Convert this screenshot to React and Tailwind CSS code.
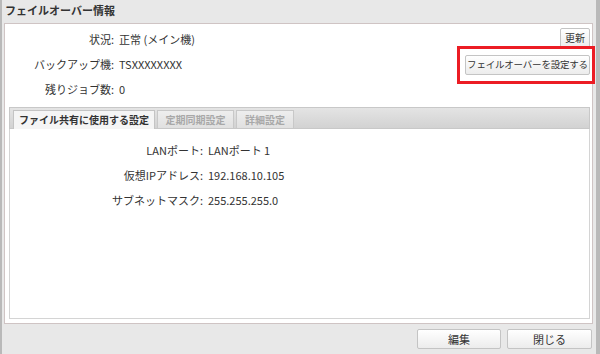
import React, { useState } from 'react';

const font = { fontFamily: '"Noto Sans CJK JP", "Noto Sans", sans-serif' };

const Btn = ({ children, className = '' }) => (
    <button
        className={`h-[20px] flex items-center justify-center whitespace-nowrap rounded-[2px] border border-[#c4c4c4] bg-gradient-to-b from-[#ffffff] to-[#ececec] leading-none text-[#333] ${className}`}
    >
        {children}
    </button>
);

const Row = ({ label, value, labelWidth }) => (
    <div className="flex items-center h-[25px] text-[11px] leading-none text-[#333]">
        <span className={`${labelWidth} text-right`}>{label}:</span>
        <span className="ml-[5px]">{value}</span>
    </div>
);

const tabs = [
    { name: 'ファイル共有に使用する設定', w: 'w-[142px]' },
    { name: '定期同期設定', w: 'w-[77px]' },
    { name: '詳細設定', w: 'w-[58px]' },
];

const App = () => {
    const [active, setActive] = useState(0);

    return (
        <div style={font} className="w-[600px] h-[354px] bg-[#e8e8e8] border-l-2 border-r-4 border-[#b9b9b9] flex flex-col">
            <div className="h-[23px] pl-[3px] pt-[5px] text-[11px] leading-none font-bold text-[#333]">
                フェイルオーバー情報
            </div>

            <div className="ml-[2px] w-[589px] h-[301px] bg-white border border-[#cfc4c4] flex flex-col">
                <div className="flex h-[83px]">
                    <div className="flex-1 pt-[3px]">
                        <Row label="状況" value="正常 (メイン機)" labelWidth="w-[109px]" />
                        <Row label="バックアップ機" value="TSXXXXXXXX" labelWidth="w-[109px]" />
                        <Row label="残りジョブ数" value="0" labelWidth="w-[109px]" />
                    </div>
                    <div className="flex flex-col items-end pt-[4px] pr-[2px]">
                        <Btn className="w-[30px] text-[10px]">更新</Btn>
                        <div className="relative mt-[7px]">
                            <Btn className="w-[125px] text-[9.5px] tracking-[-0.2px]">フェイルオーバーを設定する</Btn>
                            <div className="absolute -left-[8px] -right-[5px] -top-[9px] -bottom-[9px] border-[3px] border-[#ec1c24] pointer-events-none" />
                        </div>
                    </div>
                </div>

                <div className="ml-[4px] mr-[2px] flex-1 mb-[4px] flex flex-col">
                    <div className="h-[22px] border border-[#c8c8c8] bg-gradient-to-b from-[#e4e4e4] to-[#d2d2d2] flex items-end pl-[3px] gap-[2px]">
                        {tabs.map((t, i) => (
                            <div
                                key={t.name}
                                onClick={() => setActive(i)}
                                className={
                                    i === active
                                        ? `${t.w} h-[19px] -mb-px flex items-center justify-center border border-b-0 border-[#c4c4c4] bg-[#f5f5f5] text-[10px] leading-none font-bold text-[#333] cursor-pointer`
                                        : `${t.w} h-[18px] flex items-center justify-center border border-b-0 border-[#c8c8c8] bg-gradient-to-b from-[#eeeeee] to-[#e0e0e0] text-[10px] leading-none font-bold text-[#a8a8a8] cursor-pointer`
                                }
                            >
                                {t.name}
                            </div>
                        ))}
                    </div>
                    <div className="flex-1 border border-t-0 border-[#d4d4d4] pt-[9px]">
                        <Row label="LANポート" value="LANポート 1" labelWidth="w-[193px]" />
                        <Row label="仮想IPアドレス" value="192.168.10.105" labelWidth="w-[193px]" />
                        <Row label="サブネットマスク" value="255.255.255.0" labelWidth="w-[193px]" />
                    </div>
                </div>
            </div>

            <div className="flex justify-end gap-[6px] pr-[4px] mt-[5px]">
                <Btn className="w-[84px] text-[11px]">編集</Btn>
                <Btn className="w-[85px] text-[11px]">閉じる</Btn>
            </div>
        </div>
    );
};

export default App;
